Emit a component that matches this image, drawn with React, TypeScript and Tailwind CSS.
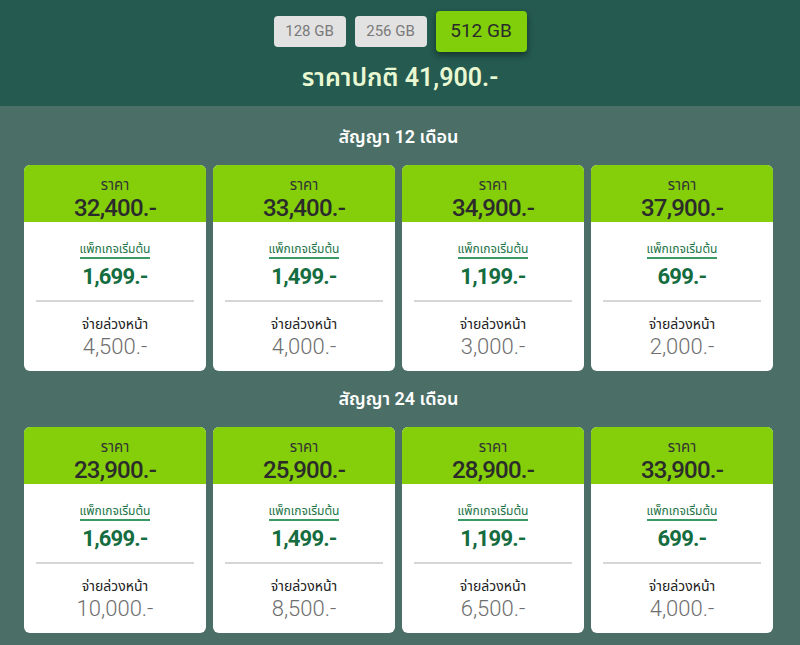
import React, { useState } from "react";

interface Plan {
  price: string;
  pkg: string;
  down: string;
}

const sizes = ["128 GB", "256 GB", "512 GB"];

const contracts: { title: string; plans: Plan[] }[] = [
  {
    title: "สัญญา 12 เดือน",
    plans: [
      { price: "32,400.-", pkg: "1,699.-", down: "4,500.-" },
      { price: "33,400.-", pkg: "1,499.-", down: "4,000.-" },
      { price: "34,900.-", pkg: "1,199.-", down: "3,000.-" },
      { price: "37,900.-", pkg: "699.-", down: "2,000.-" },
    ],
  },
  {
    title: "สัญญา 24 เดือน",
    plans: [
      { price: "23,900.-", pkg: "1,699.-", down: "10,000.-" },
      { price: "25,900.-", pkg: "1,499.-", down: "8,500.-" },
      { price: "28,900.-", pkg: "1,199.-", down: "6,500.-" },
      { price: "33,900.-", pkg: "699.-", down: "4,000.-" },
    ],
  },
];

const PlanCard: React.FC<{ plan: Plan }> = ({ plan }) => (
  <div className="h-[206px] rounded-[6px] bg-white overflow-hidden flex flex-col">
    {/* price header */}
    <div className="h-[57px] shrink-0 bg-[#84cf0a] flex flex-col items-center pt-[9px]">
      <div className="text-[15px] leading-[22px] text-[#333]">ราคา</div>
      <div className="text-[24px] leading-[24px] font-medium tracking-[-0.8px] text-[#2b2b2b]">
        {plan.price}
      </div>
    </div>

    <div className="flex flex-col items-center pt-[19px]">
      <div className="text-[12px] leading-[16px] text-[#1d7447] border-b-2 border-[#3a9a66]">
        แพ็กเกจเริ่มต้น
      </div>
      <div className="mt-[5px] text-[22px] leading-[26px] font-bold tracking-[-0.8px] text-[#146c3f]">
        {plan.pkg}
      </div>
    </div>

    <div className="mx-[12px] mt-[10px] h-[2px] bg-[#d6d6d6]" />

    <div className="flex flex-col items-center pt-[12px]">
      <div className="text-[14px] leading-[20px] text-[#222]">จ่ายล่วงหน้า</div>
      <div className="text-[22px] leading-[26px] font-light text-[#6f6f6f]">
        {plan.down}
      </div>
    </div>
  </div>
);

export default function App() {
  const [size, setSize] = useState("512 GB");

  return (
    <div
      className="w-[800px] h-[645px] bg-[#4b6f67] overflow-hidden"
      style={{ fontFamily: 'Roboto, "Noto Sans Thai", "Noto Sans", sans-serif' }}
    >
      {/* Top band */}
      <div className="h-[106px] bg-[#245a4f] flex flex-col items-center">
        <div className="flex items-center gap-[9px] h-[63px]">
          {sizes.map((s) =>
            s === size ? (
              <button
                key={s}
                onClick={() => setSize(s)}
                className="w-[91px] h-[41px] rounded-[4px] bg-[#80cf0a] text-[19px] text-[#2a2a2a] shadow-[0_3px_6px_rgba(0,0,0,0.45)]"
              >
                {s}
              </button>
            ) : (
              <button
                key={s}
                onClick={() => setSize(s)}
                className="w-[72px] h-[31px] rounded-[4px] bg-[#e2e2e2] text-[15px] text-[#7a7a7a]"
              >
                {s}
              </button>
            )
          )}
        </div>
        <div className="text-[25px] leading-[30px] font-semibold text-[#e9f8d2]">
          ราคาปกติ 41,900.-
        </div>
      </div>

      {/* Contracts */}
      <div className="pl-[24px] pt-[15px]">
        {contracts.map((c, i) => (
          <div key={c.title} className={i > 0 ? "mt-[12px]" : ""}>
            <div className="w-[749px] h-[30px] flex items-center justify-center text-[18px] font-semibold text-white">
              {c.title}
            </div>
            <div className="w-[749px] mt-[14px] grid grid-cols-4 gap-[7px]">
              {c.plans.map((p, j) => (
                <PlanCard key={j} plan={p} />
              ))}
            </div>
          </div>
        ))}
      </div>
    </div>
  );
}
